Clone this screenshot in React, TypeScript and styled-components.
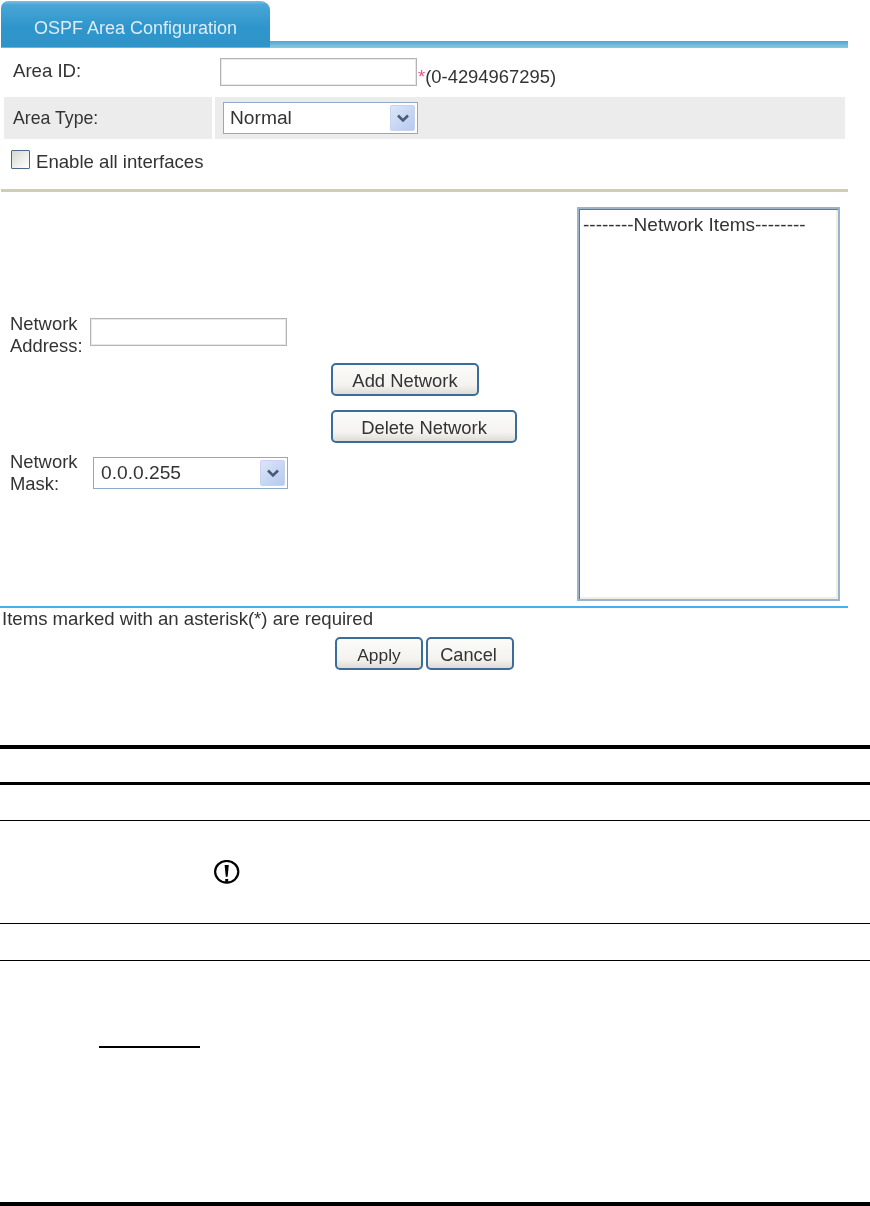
import React from "react";
import styled, { createGlobalStyle } from "styled-components";

const Global = createGlobalStyle`
  html, body { margin: 0; padding: 0; background: #fff; }
  body { font-family: "Liberation Sans", Arial, sans-serif; color: #333; }
  * { box-sizing: border-box; }
`;

const Page = styled.div`
  width: 870px;
  height: 1206px;
  overflow: hidden;
  display: flex;
  flex-direction: column;
`;

const Form = styled.div`
  width: 848px;
  height: 745px;
  font-size: 18.6px;
  filter: blur(0.45px);
`;

const TabBar = styled.div`
  height: 48px;
  display: flex;
  align-items: flex-end;
`;

const Tab = styled.div`
  margin-left: 1px;
  width: 269px;
  height: 47px;
  flex: none;
  border-radius: 7px 9px 0 0;
  background: linear-gradient(#7cc0e0 0, #4aa6d6 8%, #2f96cc 55%, #2f94c8 100%);
  border-bottom: 1px solid #6fb3d8;
  color: #dcedf6;
  font-size: 18px;
  display: flex;
  align-items: center;
  justify-content: center;
  padding: 8px 0 0 0;
`;

const TabLine = styled.div`
  flex: 1;
  height: 7px;
  background: linear-gradient(#4ea6d6, #8cc8e4);
`;

const AreaRow = styled.div`
  height: 48px;
  margin-left: 13px;
  display: flex;
  align-items: center;
`;

const AreaLabel = styled.div`
  width: 207px;
  padding-bottom: 2px;
`;

const TextInput = styled.div`
  width: ${(p) => p.$w}px;
  height: 28px;
  flex: none;
  background: #fff;
  border: 1px solid #b5b5b5;
  box-shadow: inset 0 0 0 1px #e8e8e8;
`;

const Hint = styled.span`
  margin-left: 1px;
  padding-top: 9px;
  font-size: 18.4px;
`;

const Star = styled.span`
  color: #f0548c;
`;

const TypeRow = styled.div`
  height: 42px;
  margin: 1px 3px 0 4px;
  display: grid;
  grid-template-columns: 208px 1fr;
  column-gap: 3px;
`;

const TypeCell = styled.div`
  background: #ececec;
  display: flex;
  align-items: center;
  padding-left: ${(p) => p.$pad}px;
`;

const TypeLabel = styled.span`
  font-size: 17.7px;
`;

const Select = styled.div`
  width: ${(p) => p.$w}px;
  height: 32px;
  flex: none;
  background: #fff;
  border: 1px solid #8fa9c9;
  padding: 2px 2px 2px ${(p) => p.$pad}px;
  display: flex;
  align-items: center;
  justify-content: space-between;
  color: #333;
  font-size: 19.2px;
`;

const SelectArrow = styled.span`
  width: 25px;
  height: 26px;
  border-radius: 2px;
  background: linear-gradient(135deg, #dbe6f8, #b6c9f0);
  border: 1px solid #c6d4f0;
  display: flex;
  align-items: center;
  justify-content: center;
`;

const CheckRow = styled.div`
  height: 50px;
  margin-left: 11px;
  padding-bottom: 9px;
  display: flex;
  align-items: center;
  gap: 6px;
`;

const CheckBox = styled.span`
  width: 19px;
  height: 19px;
  border: 1px solid #4a6a88;
  border-radius: 1px;
  background: linear-gradient(135deg, #d8d8d2, #fff);
`;

const CheckText = styled.span`
  padding-top: 4px;
`;

const Separator = styled.div`
  margin-left: 1px;
  height: 3px;
  background: #cfccb8;
`;

const NetworkArea = styled.div`
  height: 414px;
  display: grid;
  grid-template-columns: 331px 246px 263px;
`;

const LeftColumn = styled.div`
  padding: 121px 0 0 10px;
  display: flex;
  flex-direction: column;
  gap: 94px;
`;

const FieldRow = styled.div`
  display: flex;
  align-items: center;
  height: 44px;
`;

const FieldLabel = styled.div`
  width: ${(p) => p.$w}px;
  line-height: 22px;
  flex: none;
  font-size: 18.4px;
`;

const AddressInput = styled(TextInput)`
  margin-top: -6px;
`;

const MiddleColumn = styled.div`
  padding-top: 171px;
  display: flex;
  flex-direction: column;
  align-items: flex-start;
  gap: 14px;
`;

const Button = styled.div`
  width: ${(p) => p.$w}px;
  height: 33px;
  border: 2px solid #3a6d9a;
  border-radius: 5px;
  background: linear-gradient(#fbfbf9 0, #f4f3ef 70%, #dedcd4 100%);
  display: flex;
  align-items: center;
  justify-content: center;
  color: #333;
  font-size: ${(p) => p.$fs}px;
  padding: 3px ${(p) => p.$right || 0}px 0 0;
`;

const ListBox = styled.div`
  margin-top: 15px;
  height: 394px;
  border: 2px solid #9ab4d0;
  box-shadow: inset 1px 1px 0 #77756c, inset -2px -2px 0 #f1efe2;
  padding: 5px 4px;
  line-height: 22px;
  white-space: nowrap;
  font-size: 19px;
`;

const BlueRule = styled.div`
  height: 2px;
  background: #45b0ec;
`;

const Note = styled.div`
  height: 22px;
  padding: 0 0 0 2px;
  line-height: 22px;
`;

const Actions = styled.div`
  margin: 7px 0 0 335px;
  display: flex;
  gap: 3px;
`;

const DocTable = styled.div`
  display: flex;
  flex-direction: column;
`;

const Rule = styled.div`
  height: ${(p) => p.$h}px;
  background: #000;
  flex: none;
`;

const DocRow = styled.div`
  height: ${(p) => p.$h}px;
  flex: none;
`;

const NoteIcon = styled.svg`
  display: block;
  margin: 39px 0 0 214px;
`;

const Underline = styled.div`
  width: 101px;
  height: 2px;
  background: #000;
  margin: 85px 0 0 99px;
`;

const Chevron = () => (
  <svg width="14" height="10" viewBox="0 0 14 10">
    <path d="M2 2.5 L7 7.5 L12 2.5" fill="none" stroke="#4a5a78" strokeWidth="2.6" />
  </svg>
);

export default function App() {
  return (
    <Page>
      <Global />
      <Form>
        <TabBar>
          <Tab>OSPF Area Configuration</Tab>
          <TabLine />
        </TabBar>
        <AreaRow>
          <AreaLabel>Area ID:</AreaLabel>
          <TextInput $w={197} />
          <Hint>
            <Star>*</Star>(0-4294967295)
          </Hint>
        </AreaRow>
        <TypeRow>
          <TypeCell $pad={9}>
            <TypeLabel>Area Type:</TypeLabel>
          </TypeCell>
          <TypeCell $pad={8}>
            <Select $w={195} $pad={6}>
              Normal
              <SelectArrow>
                <Chevron />
              </SelectArrow>
            </Select>
          </TypeCell>
        </TypeRow>
        <CheckRow>
          <CheckBox />
          <CheckText>Enable all interfaces</CheckText>
        </CheckRow>
        <Separator />
        <NetworkArea>
          <LeftColumn>
            <FieldRow>
              <FieldLabel $w={80}>
                Network
                <br />
                Address:
              </FieldLabel>
              <AddressInput $w={197} />
            </FieldRow>
            <FieldRow>
              <FieldLabel $w={83}>
                Network
                <br />
                Mask:
              </FieldLabel>
              <Select $w={195} $pad={7}>
                0.0.0.255
                <SelectArrow>
                  <Chevron />
                </SelectArrow>
              </Select>
            </FieldRow>
          </LeftColumn>
          <MiddleColumn>
            <Button $w={148} $fs={18.4}>Add Network</Button>
            <Button $w={186} $fs={18.4}>Delete Network</Button>
          </MiddleColumn>
          <ListBox>--------Network Items--------</ListBox>
        </NetworkArea>
        <BlueRule />
        <Note>Items marked with an asterisk(*) are required</Note>
        <Actions>
          <Button $w={88} $fs={17.4}>Apply</Button>
          <Button $w={88} $fs={18.2} $right={3}>Cancel</Button>
        </Actions>
      </Form>
      <DocTable>
        <Rule $h={4} />
        <DocRow $h={33} />
        <Rule $h={3} />
        <DocRow $h={35} />
        <Rule $h={1} />
        <DocRow $h={102}>
          <NoteIcon width="27" height="25" viewBox="0 0 27 25">
            <ellipse cx="12.7" cy="11.8" rx="11.6" ry="10.8" fill="none" stroke="#000" strokeWidth="2.2" />
            <path d="M10.6 5 H14.8 L13.6 16.7 H11.8 Z" fill="#000" />
            <rect x="11.2" y="19" width="3" height="2.8" fill="#000" />
          </NoteIcon>
        </DocRow>
        <Rule $h={1} />
        <DocRow $h={36} />
        <Rule $h={1} />
        <DocRow $h={241}>
          <Underline />
        </DocRow>
        <Rule $h={4} />
      </DocTable>
    </Page>
  );
}
